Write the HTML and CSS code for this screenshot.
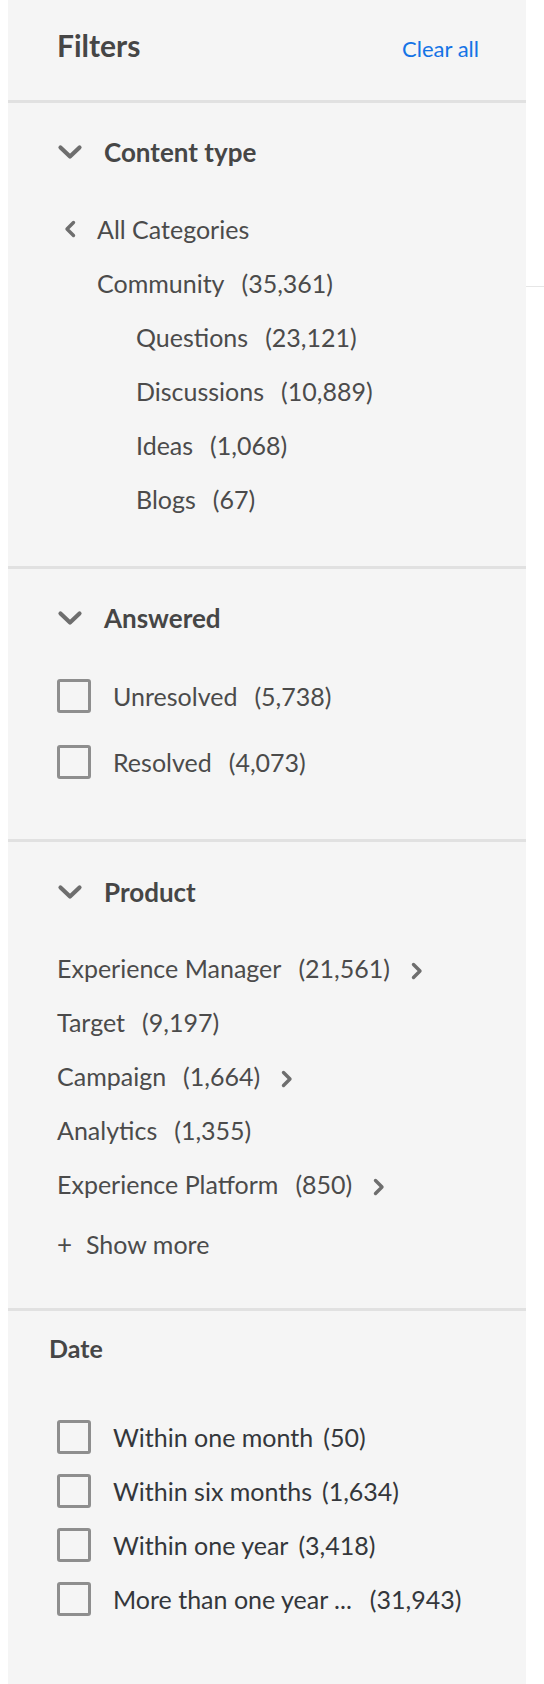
FILE: index.html
```html
<!DOCTYPE html>
<html lang="en">
<head>
<meta charset="utf-8">
<title>Filters</title>
<link rel="stylesheet" href="styles.css">
</head>
<body>
<div class="page">
  <aside class="panel">
    <div class="header">
      <h2 class="title">Filters</h2>
      <a class="clear" href="#">Clear all</a>
    </div>

    <section class="group group-content">
      <div class="group-head">
        <svg class="chev-down" viewBox="0 0 26 16" width="26" height="16"><path d="M3.5 3.5 L13 12.5 L22.5 3.5"/></svg>
        <span>Content type</span>
      </div>
      <ul class="list">
        <li class="row back"><svg class="chev-left" viewBox="0 0 14 18" width="14" height="18"><path d="M10.5 2.5 L4 9 L10.5 15.5"/></svg><span>All Categories</span></li>
        <li class="row lvl1"><span>Community</span><span class="count">(35,361)</span></li>
        <li class="row lvl2"><span>Questions</span><span class="count">(23,121)</span></li>
        <li class="row lvl2"><span>Discussions</span><span class="count">(10,889)</span></li>
        <li class="row lvl2"><span>Ideas</span><span class="count">(1,068)</span></li>
        <li class="row lvl2"><span>Blogs</span><span class="count">(67)</span></li>
      </ul>
    </section>

    <section class="group group-answered">
      <div class="group-head">
        <svg class="chev-down" viewBox="0 0 26 16" width="26" height="16"><path d="M3.5 3.5 L13 12.5 L22.5 3.5"/></svg>
        <span>Answered</span>
      </div>
      <ul class="list checks">
        <li class="row check-row"><span class="box"></span><span>Unresolved</span><span class="count">(5,738)</span></li>
        <li class="row check-row"><span class="box"></span><span>Resolved</span><span class="count">(4,073)</span></li>
      </ul>
    </section>

    <section class="group group-product">
      <div class="group-head">
        <svg class="chev-down" viewBox="0 0 26 16" width="26" height="16"><path d="M3.5 3.5 L13 12.5 L22.5 3.5"/></svg>
        <span>Product</span>
      </div>
      <ul class="list">
        <li class="row"><span>Experience Manager</span><span class="count">(21,561)</span><svg class="chev-right" viewBox="0 0 14 18" width="14" height="18"><path d="M3.5 2.5 L10 9 L3.5 15.5"/></svg></li>
        <li class="row"><span>Target</span><span class="count">(9,197)</span></li>
        <li class="row"><span>Campaign</span><span class="count">(1,664)</span><svg class="chev-right" viewBox="0 0 14 18" width="14" height="18"><path d="M3.5 2.5 L10 9 L3.5 15.5"/></svg></li>
        <li class="row"><span>Analytics</span><span class="count">(1,355)</span></li>
        <li class="row"><span>Experience Platform</span><span class="count">(850)</span><svg class="chev-right" viewBox="0 0 14 18" width="14" height="18"><path d="M3.5 2.5 L10 9 L3.5 15.5"/></svg></li>
        <li class="row more"><span class="plus">+</span><span>Show more</span></li>
      </ul>
    </section>

    <section class="group group-date">
      <div class="date-head">Date</div>
      <ul class="list dates">
        <li class="row check-row date-row"><span class="box"></span><span>Within one month</span><span class="count">(50)</span></li>
        <li class="row check-row date-row"><span class="box"></span><span>Within six months</span><span class="count">(1,634)</span></li>
        <li class="row check-row date-row"><span class="box"></span><span>Within one year</span><span class="count">(3,418)</span></li>
        <li class="row check-row date-row"><span class="box"></span><span>More than one year ...</span><span class="count wide">(31,943)</span></li>
      </ul>
    </section>
  </aside>
  <div class="main">
    <div class="main-top"></div>
  </div>
</div>
</body>
</html>
```

FILE: styles.css
```css
html, body {
  margin: 0;
  padding: 0;
  background: #ffffff;
}

body {
  font-family: Lato, "Open Sans", "DejaVu Sans", sans-serif;
  color: #4b4b4b;
}

.page {
  display: flex;
  min-height: 1684px;
}

.panel {
  flex: none;
  width: 518px;
  margin-left: 8px;
  background: #f5f5f5;
  min-height: 1684px;
}

.main {
  flex: 1;
}

.main-top {
  height: 286px;
  border-bottom: 1px solid #e6e6e6;
}

.header {
  box-sizing: border-box;
  height: 103px;
  display: flex;
  align-items: center;
  justify-content: space-between;
  padding: 0 47px 10px 49px;
  border-bottom: 3px solid #e1e1e1;
}

.title {
  margin: 0;
  font-size: 30px;
  font-weight: 700;
  line-height: 36px;
  color: #464646;
}

.clear {
  font-size: 22px;
  line-height: 28px;
  color: #1473e6;
  text-decoration: none;
  margin-top: 8px;
}

.group {
  padding: 31px 0 40px 49px;
  border-bottom: 3px solid #e1e1e1;
}

.group-head {
  display: flex;
  align-items: center;
  gap: 21px;
  height: 36px;
  font-size: 26px;
  font-weight: 700;
  color: #464646;
}

.chev-down path,
.chev-left path,
.chev-right path {
  fill: none;
  stroke: #6e6e6e;
  stroke-width: 4.2;
  stroke-linecap: round;
  stroke-linejoin: round;
}

.chev-left path,
.chev-right path {
  stroke-width: 3.4;
}

.list {
  list-style: none;
  margin: 32px 0 0;
  padding: 0;
}

.row {
  height: 54px;
  display: flex;
  align-items: center;
  font-size: 25px;
  color: #4b4b4b;
  white-space: nowrap;
}

.count {
  margin-left: 17px;
}

.back {
  padding-left: 6px;
}

.back .chev-left {
  margin-right: 20px;
}

.lvl1 {
  padding-left: 40px;
}

.lvl2 {
  padding-left: 79px;
}

.chev-right {
  margin-left: 20px;
  margin-top: 5px;
}

/* Answered */
.group-answered {
  padding-bottom: 50px;
}

.checks {
  margin-top: 33px;
  display: flex;
  flex-direction: column;
  gap: 12px;
}

.box {
  flex: none;
  box-sizing: border-box;
  width: 34px;
  height: 34px;
  border: 3px solid #8e8e8e;
  border-radius: 3px;
  margin-right: 22px;
}

/* Product */
.group-product {
  padding-top: 32px;
  padding-bottom: 37px;
}

.group-product .list {
  margin-top: 31px;
}

.more {
  margin-top: 6px;
}

.plus {
  font-size: 26px;
  width: 29px;
}

/* Date */
.group-date {
  padding: 19px 0 0 41px;
  border-bottom: none;
}

.date-head {
  height: 36px;
  line-height: 36px;
  font-size: 25px;
  font-weight: 700;
  color: #464646;
}

.dates {
  margin-top: 44px;
  padding-left: 8px;
}

.date-row {
  color: #34373b;
}

.date-row .count {
  margin-left: 10px;
}

.date-row .count.wide {
  margin-left: 18px;
}
```
